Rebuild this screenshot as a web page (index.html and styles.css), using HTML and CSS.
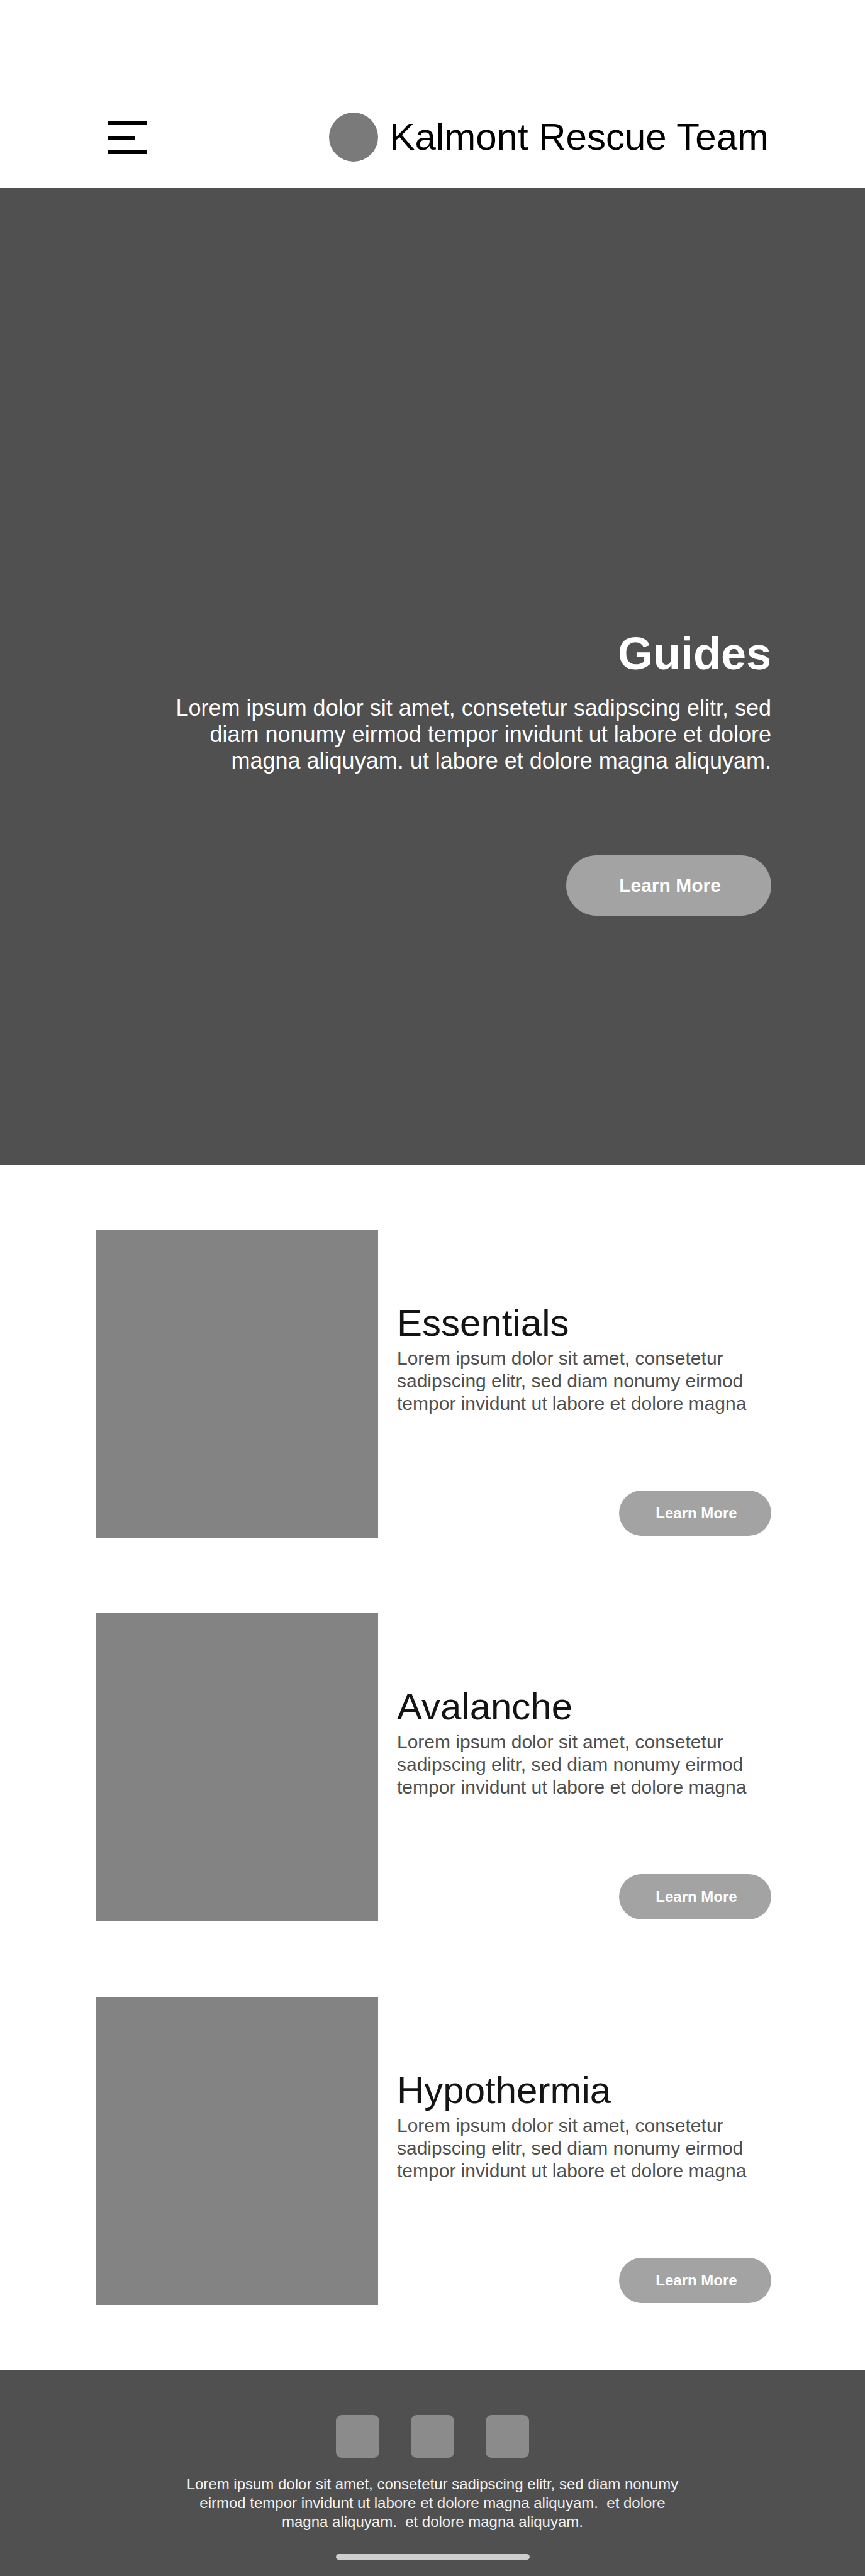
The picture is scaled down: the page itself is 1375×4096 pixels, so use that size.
FILE: index.html
```html
<!DOCTYPE html>
<html lang="en">
<head>
  <meta charset="utf-8">
  <meta name="viewport" content="width=device-width, initial-scale=1">
  <title>Kalmont Rescue Team</title>
  <link rel="stylesheet" href="styles.css">
</head>
<body>
  <header class="site-header">
    <button class="menu-button" type="button" aria-label="Menu">
      <svg class="menu-icon" viewBox="0 0 62 53" aria-hidden="true">
        <path d="M0 0h62v6H0zM0 25h43v6H0zM0 47h62v6H0z"/>
      </svg>
    </button>
    <a class="brand" href="#">
      <span class="brand-mark"></span>
      <span class="brand-name">Kalmont Rescue Team</span>
    </a>
  </header>

  <main>
    <section class="hero">
      <h1 class="hero-title">Guides</h1>
      <p class="hero-text">Lorem ipsum dolor sit amet, consetetur sadipscing elitr, sed diam nonumy eirmod tempor invidunt ut labore et dolore magna aliquyam. ut labore et dolore magna aliquyam.</p>
      <button class="button button-large" type="button">Learn More</button>
    </section>

    <section class="guides">
      <article class="guide">
        <div class="guide-image"></div>
        <div class="guide-body">
          <h2 class="guide-title">Essentials</h2>
          <p class="guide-text">Lorem ipsum dolor sit amet, consetetur sadipscing elitr, sed diam nonumy eirmod tempor invidunt ut labore et dolore magna</p>
          <button class="button" type="button">Learn More</button>
        </div>
      </article>
      <article class="guide">
        <div class="guide-image"></div>
        <div class="guide-body">
          <h2 class="guide-title">Avalanche</h2>
          <p class="guide-text">Lorem ipsum dolor sit amet, consetetur sadipscing elitr, sed diam nonumy eirmod tempor invidunt ut labore et dolore magna</p>
          <button class="button" type="button">Learn More</button>
        </div>
      </article>
      <article class="guide">
        <div class="guide-image"></div>
        <div class="guide-body">
          <h2 class="guide-title">Hypothermia</h2>
          <p class="guide-text">Lorem ipsum dolor sit amet, consetetur sadipscing elitr, sed diam nonumy eirmod tempor invidunt ut labore et dolore magna</p>
          <button class="button" type="button">Learn More</button>
        </div>
      </article>
    </section>
  </main>

  <footer class="site-footer">
    <nav class="social" aria-label="Social media">
      <a class="social-link" href="#" aria-label="First profile"></a>
      <a class="social-link" href="#" aria-label="Second profile"></a>
      <a class="social-link" href="#" aria-label="Third profile"></a>
    </nav>
    <p class="footer-text">Lorem ipsum dolor sit amet, consetetur sadipscing elitr, sed diam nonumy eirmod tempor invidunt ut labore et dolore magna aliquyam.&nbsp; et dolore magna aliquyam.&nbsp; et dolore magna aliquyam.</p>
    <div class="home-bar"></div>
  </footer>
</body>
</html>
```
FILE: styles.css
```css
* {
  box-sizing: border-box;
}

body {
  margin: 0;
  background: #fff;
  color: #000;
  font-family: "Liberation Sans", Arial, Helvetica, sans-serif;
}

h1,
h2,
p {
  margin: 0;
}

.site-header {
  display: flex;
  align-items: center;
  justify-content: space-between;
  padding: 179px 153px 42px 171px;
}

.menu-button {
  display: flex;
  padding: 0;
  border: 0;
  background: none;
  cursor: pointer;
}

.menu-icon {
  width: 62px;
  height: 53px;
}

.brand {
  display: flex;
  align-items: center;
  gap: 18px;
  color: #000;
  text-decoration: none;
}

.brand-mark {
  width: 78px;
  height: 78px;
  border-radius: 50%;
  background: #7a7a7a;
}

.brand-name {
  font-size: 60px;
  line-height: 72px;
}

.hero {
  display: flex;
  flex-direction: column;
  align-items: flex-end;
  padding: 698px 149px 397px;
  background: #505050;
  color: #fff;
  text-align: right;
}

.hero-title {
  font-size: 72px;
  line-height: 84px;
}

.hero-text {
  max-width: 960px;
  margin: 24px 0 129px;
  font-size: 36px;
  line-height: 42px;
}

.button {
  width: 242px;
  height: 72px;
  padding: 0 0 0 4px;
  border: 0;
  border-radius: 36px;
  background: #a3a3a3;
  color: #fff;
  font-family: inherit;
  font-size: 24px;
  font-weight: 700;
  cursor: pointer;
}

.button-large {
  width: 326px;
  height: 96px;
  border-radius: 48px;
  font-size: 30px;
}

.guides {
  display: grid;
  gap: 120px;
  padding: 102px 149px 104px 153px;
}

.guide {
  display: grid;
  grid-template-columns: minmax(0, 448fr) minmax(0, 595fr);
  gap: 30px;
}

.guide-image {
  aspect-ratio: 448 / 490;
  background: #838383;
}

.guide-body {
  display: flex;
  flex-direction: column;
  padding: 113px 0 3px;
}

.guide-title {
  color: #141414;
  font-size: 60px;
  font-weight: 400;
  line-height: 72px;
}

.guide-text {
  margin-top: 2px;
  color: #505050;
  font-size: 30px;
  line-height: 36px;
}

.guide-body .button {
  align-self: flex-end;
  margin-top: auto;
}

.site-footer {
  display: flex;
  flex-direction: column;
  align-items: center;
  padding: 71px 24px 26px;
  background: #505050;
}

.social {
  display: flex;
  gap: 50px;
}

.social-link {
  width: 69px;
  height: 68px;
  border-radius: 9px;
  background: #8b8b8b;
}

.footer-text {
  max-width: 800px;
  margin: 27px 0 36px;
  color: #f2f2f2;
  font-size: 24px;
  line-height: 30px;
  text-align: center;
}

.home-bar {
  width: 308px;
  height: 9px;
  border-radius: 5px;
  background: #cecece;
}
```
